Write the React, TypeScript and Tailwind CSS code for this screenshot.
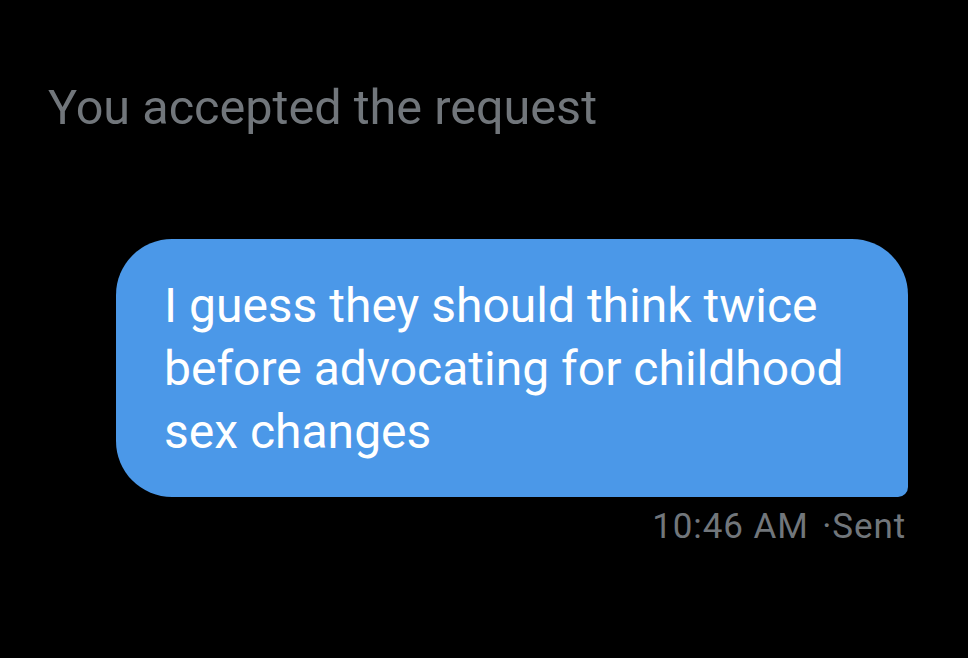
export default function App() {
  return (
    <div className="h-[658px] w-full overflow-hidden bg-black font-['Roboto',sans-serif]">
      {/* request notice */}
      <div className="pl-[48px] pt-[80px]">
        <p className="text-[48.6px] leading-[56px] text-[#71767b]">You accepted the request</p>
      </div>

      {/* sent message */}
      <div className="mt-[103px] flex flex-col items-end pl-[116px] pr-[60px]">
        <div className="w-full rounded-[56px] rounded-br-[10px] bg-[#4b98e8] pt-[35px] pb-[34px] pl-[48px] pr-[50px]">
          <p className="text-[48px] leading-[63px] text-white">
            I guess they should think twice before advocating for childhood sex changes
          </p>
        </div>
        <p className="mt-[9px] mr-[2px] text-[35px] leading-[42px] tracking-[0.9px] text-[#71767b]">
          10:46 AM <span className="ml-[4px]">·</span>Sent
        </p>
      </div>
    </div>
  );
}
